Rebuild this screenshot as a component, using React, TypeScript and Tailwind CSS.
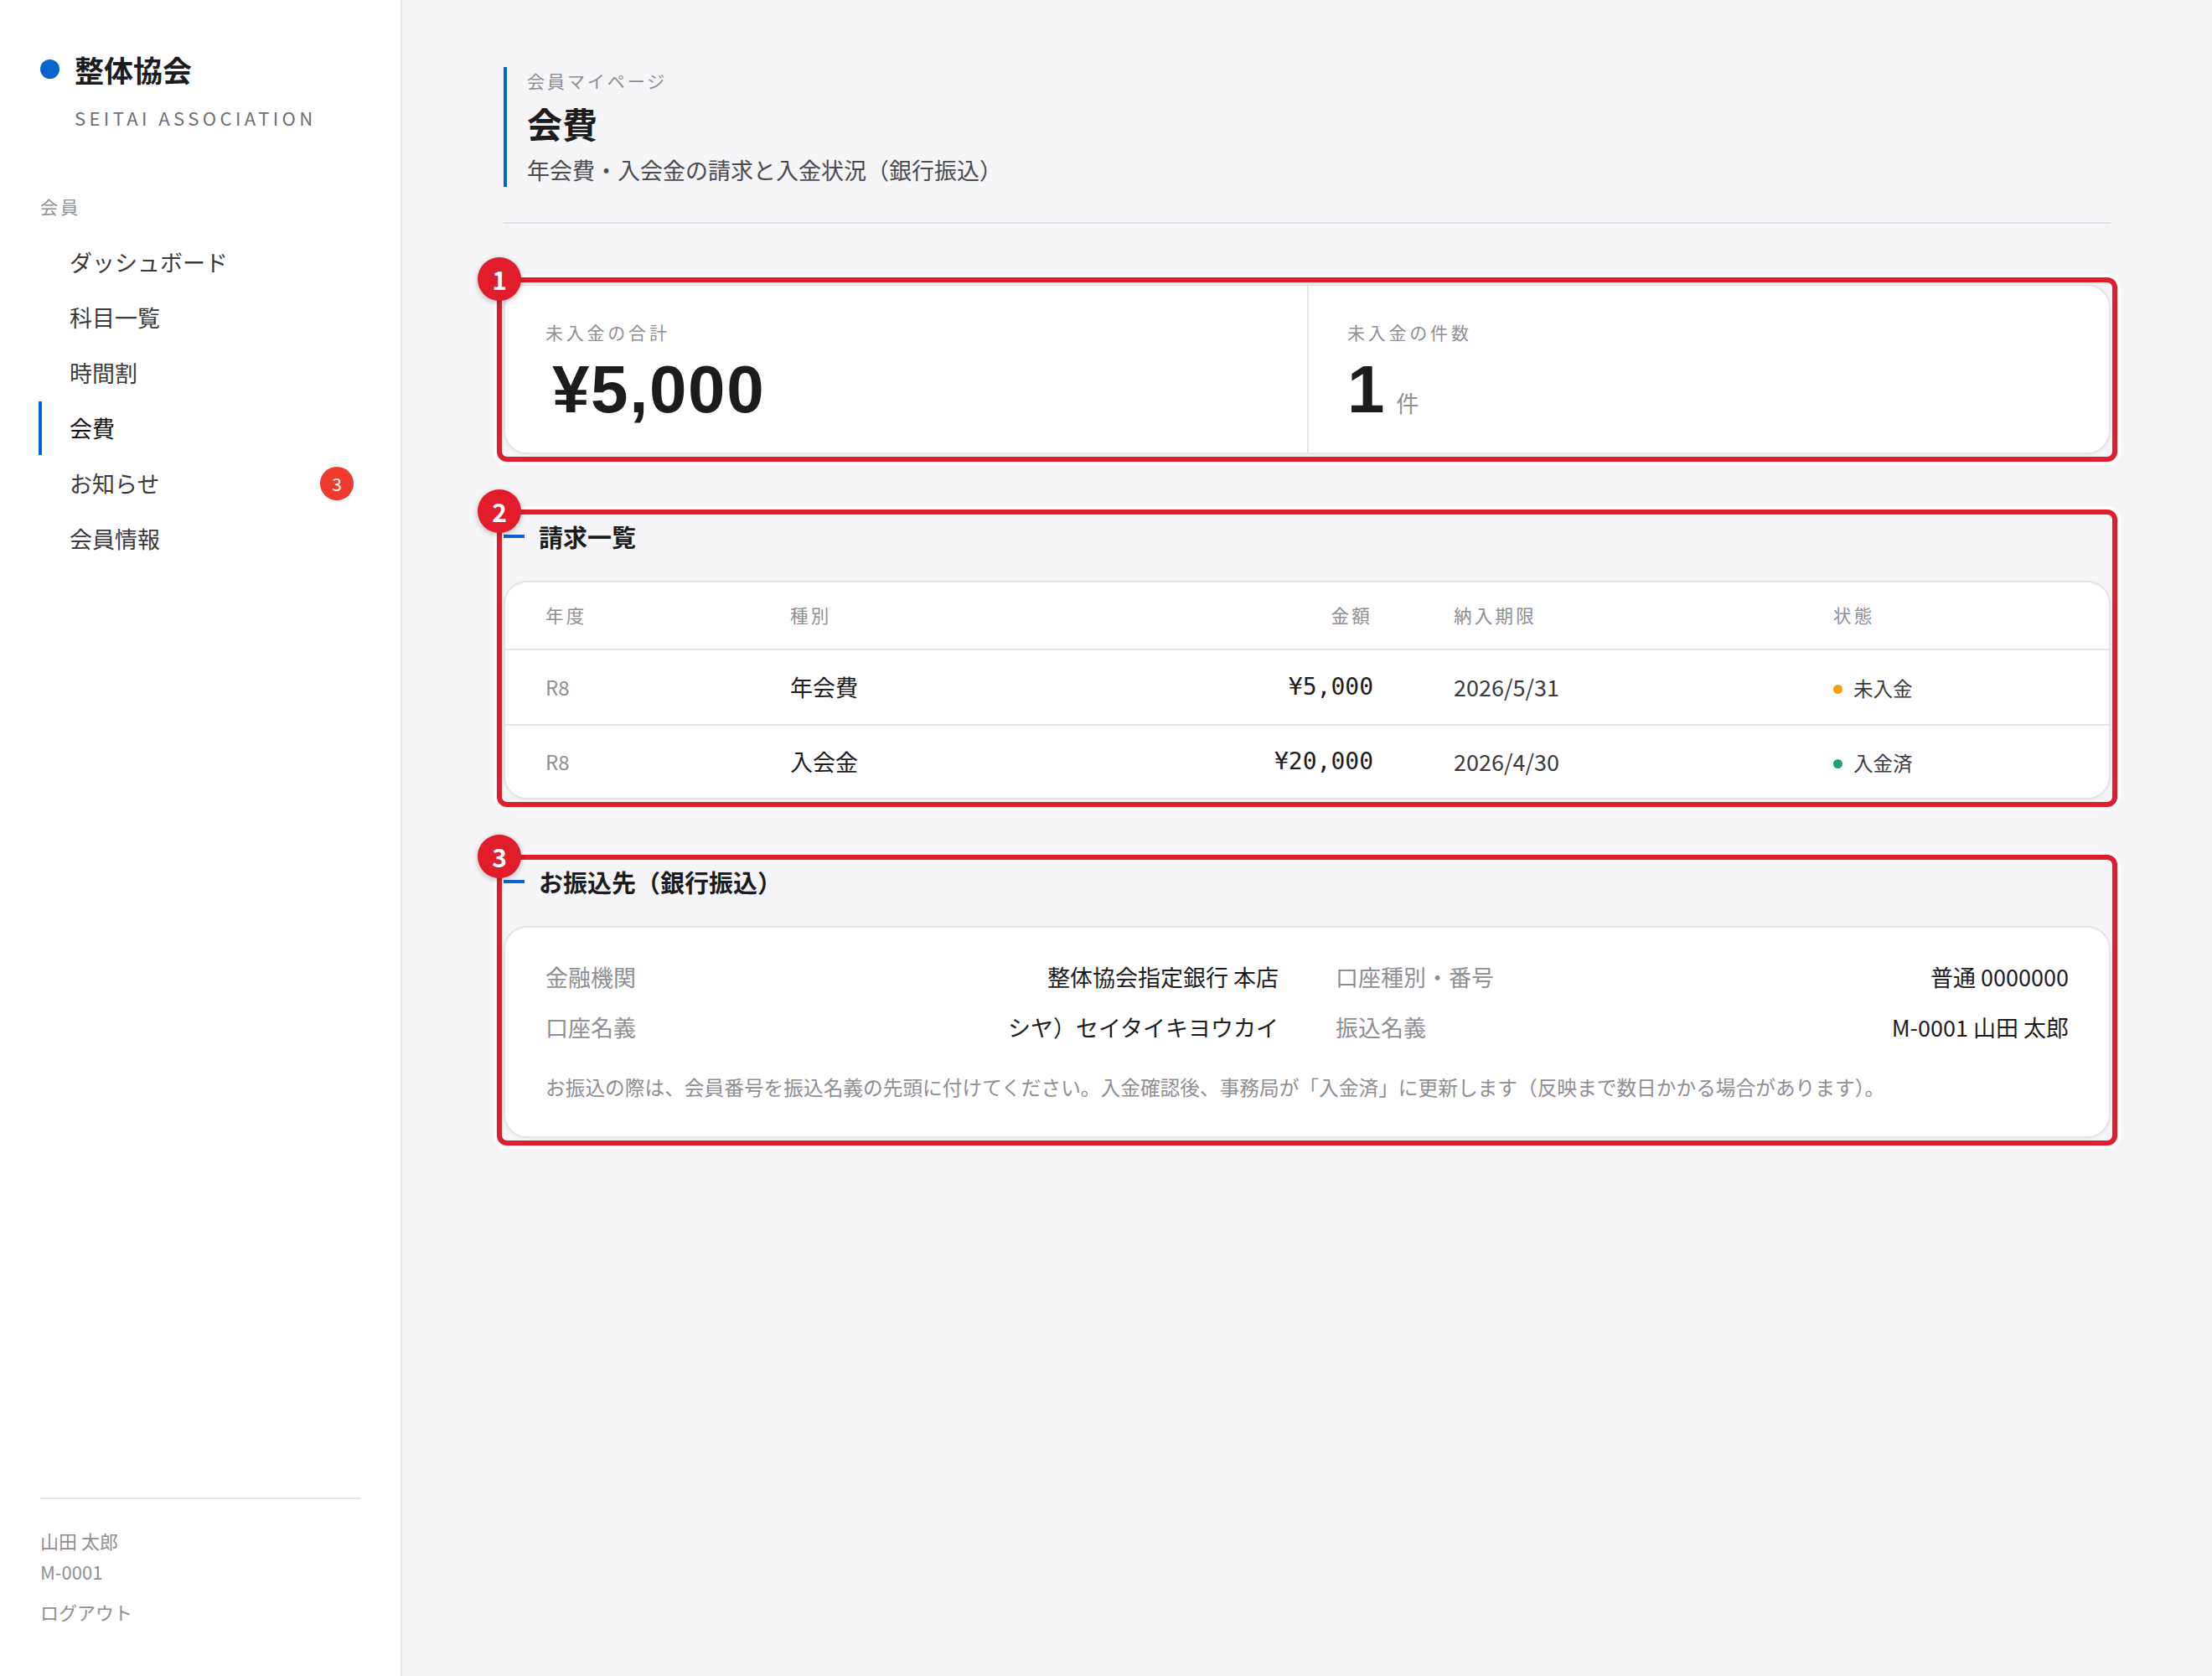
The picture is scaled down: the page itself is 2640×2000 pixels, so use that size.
import type { ReactNode } from "react";

type NavItem = {
  label: string;
  active?: boolean;
  badge?: number;
};

const navItems: NavItem[] = [
  { label: "ダッシュボード" },
  { label: "科目一覧" },
  { label: "時間割" },
  { label: "会費", active: true },
  { label: "お知らせ", badge: 3 },
  { label: "会員情報" },
];

type Invoice = {
  year: string;
  kind: string;
  amount: string;
  due: string;
  paid: boolean;
};

const invoices: Invoice[] = [
  { year: "R8", kind: "年会費", amount: "¥5,000", due: "2026/5/31", paid: false },
  { year: "R8", kind: "入会金", amount: "¥20,000", due: "2026/4/30", paid: true },
];

function Marked({ n, children }: { n: number; children: ReactNode }) {
  return (
    <section className="relative">
      {children}
      <div className="pointer-events-none absolute -left-[8px] -right-[8px] -top-[8px] -bottom-[9px] rounded-[12px] border-[6px] border-[#e11d2b] shadow-[0_0_0_4px_rgba(255,255,255,0.85)]" />
      <div className="absolute -left-[31px] -top-[32px] z-10 flex h-[52px] w-[52px] items-center justify-center rounded-full bg-[#e11d2b] text-[30px] font-bold leading-none text-white shadow-[0_2px_6px_rgba(0,0,0,0.25)]">
        {n}
      </div>
    </section>
  );
}

function SectionTitle({ children }: { children: ReactNode }) {
  return (
    <div className="mb-[29px] flex h-[48px] items-center gap-[17px]">
      <span className="h-[4px] w-[25px] bg-[#0a64d0]" />
      <h2 className="text-[29px] font-bold leading-[48px] text-[#1c1c1e]">{children}</h2>
    </div>
  );
}

function Sidebar() {
  return (
    <aside className="flex min-h-screen w-[480px] shrink-0 flex-col border-r-2 border-[#e5e5ea] bg-white pl-[48px] pr-[47px] pt-[58px] pb-[60px]">
      <div className="flex items-center gap-[18px]">
        <span className="h-[23px] w-[23px] rounded-full bg-[#0a64d0]" />
        <span className="text-[35px] font-bold leading-[49px] text-[#1c1c1e]">整体協会</span>
      </div>
      <div className="mt-[18px] pl-[41px] text-[22px] leading-[30px] tracking-[0.2em] text-[#6e6e73]">
        SEITAI ASSOCIATION
      </div>

      <div className="mt-[75px] text-[21px] leading-[32px] tracking-[0.15em] text-[#8e8e93]">会員</div>

      <nav className="mt-[19px] flex flex-col gap-[2px]">
        {navItems.map((item) => (
          <div
            key={item.label}
            className={
              item.active
                ? "-ml-[2px] flex h-[64px] items-center justify-between border-l-[4px] border-[#0a64d0] pl-[33px] pr-[9px] text-[27px] text-[#111113]"
                : "-ml-[2px] flex h-[64px] items-center justify-between border-l-[4px] border-transparent pl-[33px] pr-[9px] text-[27px] text-[#3a3a3c]"
            }
          >
            <span>{item.label}</span>
            {item.badge ? (
              <span className="flex h-[40px] w-[40px] items-center justify-center rounded-full bg-[#ef3b2d] text-[21px] leading-none text-white">
                {item.badge}
              </span>
            ) : null}
          </div>
        ))}
      </nav>

      <div className="mt-auto border-t-2 border-[#e5e5ea] pt-[31px] text-[22px] text-[#8e8e93]">
        <div className="leading-[37px]">山田 太郎</div>
        <div className="leading-[37px]">M-0001</div>
        <div className="mt-[12px] leading-[34px]">ログアウト</div>
      </div>
    </aside>
  );
}

const cols = "grid grid-cols-[292px_1fr_301px_453px_281px] items-center px-[48px]";

export default function App() {
  return (
    <div className="flex min-h-screen bg-[#f5f5f7] font-['Noto_Sans_CJK_JP','Noto_Sans',sans-serif]">
      <Sidebar />

      <main className="flex-1 px-[121px] pt-[80px] pb-[80px]">
        <div className="border-b-2 border-[#e3e3e8] pb-[42px]">
          <div className="border-l-[4px] border-[#0a64d0] pb-[3px] pl-[24px]">
            <div className="text-[21px] leading-[32px] tracking-[0.14em] text-[#8e8e93]">会員マイページ</div>
            <h1 className="mt-[7px] text-[42px] font-bold leading-[56px] text-[#1c1c1e]">会費</h1>
            <p className="mt-[11px] text-[27px] leading-[34px] text-[#4a4a4f]">
              年会費・入会金の請求と入金状況（銀行振込）
            </p>
          </div>
        </div>

        <div className="mt-[72px] flex flex-col gap-[74px]">
          <Marked n={1}>
            <div className="grid grid-cols-2 overflow-hidden rounded-[28px] border-2 border-[#e4e4e8] bg-white shadow-[0_1px_3px_rgba(0,0,0,0.05)]">
              <div className="pl-[48px] pt-[40px] pb-[28px]">
                <div className="text-[21px] leading-[30px] tracking-[0.18em] text-[#8e8e93]">未入金の合計</div>
                <div className="ml-[8px] mt-[7px] font-['Liberation_Sans',sans-serif] text-[80px] font-bold leading-[94px] tracking-[0.02em] text-[#1c1c1e]">
                  ¥5,000
                </div>
              </div>
              <div className="border-l-2 border-[#e4e4e8] pl-[46px] pt-[40px] pb-[28px]">
                <div className="text-[21px] leading-[30px] tracking-[0.18em] text-[#8e8e93]">未入金の件数</div>
                <div className="mt-[7px] flex h-[94px] items-baseline gap-[14px]">
                  <span className="font-['Liberation_Sans',sans-serif] text-[80px] font-bold leading-[94px] text-[#1c1c1e]">1</span>
                  <span className="text-[27px] leading-[30px] text-[#8e8e93]">件</span>
                </div>
              </div>
            </div>
          </Marked>

          <Marked n={2}>
            <SectionTitle>請求一覧</SectionTitle>
            <div className="overflow-hidden rounded-[28px] border-2 border-[#e4e4e8] bg-white shadow-[0_1px_3px_rgba(0,0,0,0.05)]">
              <div className={`${cols} h-[81px] border-b-2 border-[#e4e4e8] text-[21.5px] tracking-[0.15em] text-[#8e8e93]`}>
                <span>年度</span>
                <span>種別</span>
                <span className="pr-[97px] text-right">金額</span>
                <span>納入期限</span>
                <span>状態</span>
              </div>
              {invoices.map((inv, i) => (
                <div
                  key={inv.kind}
                  className={
                    i < invoices.length - 1
                      ? `${cols} h-[90px] border-b-2 border-[#e4e4e8]`
                      : `${cols} h-[86px]`
                  }
                >
                  <span className="text-[24px] text-[#8e8e93]">{inv.year}</span>
                  <span className="text-[27px] text-[#1c1c1e]">{inv.kind}</span>
                  <span className="pr-[96px] text-right font-['DejaVu_Sans_Mono',monospace] text-[28px] text-[#1c1c1e]">
                    {inv.amount}
                  </span>
                  <span className="text-[27px] text-[#3a3a3c]">{inv.due}</span>
                  <span className="flex items-center gap-[13px] pt-[4px] text-[23.5px] text-[#3a3a3c]">
                    <span className={inv.paid ? "h-[11px] w-[11px] rounded-full bg-[#22a06b]" : "h-[11px] w-[11px] rounded-full bg-[#f59e0b]"} />
                    {inv.paid ? "入金済" : "未入金"}
                  </span>
                </div>
              ))}
            </div>
          </Marked>

          <Marked n={3}>
            <SectionTitle>お振込先（銀行振込）</SectionTitle>
            <div className="rounded-[28px] border-2 border-[#e4e4e8] bg-white px-[48px] pt-[39px] pb-[41px] shadow-[0_1px_3px_rgba(0,0,0,0.05)]">
              <div className="grid grid-cols-2 gap-x-[68px] gap-y-[20px] text-[27px] leading-[40px]">
                <div className="flex justify-between">
                  <span className="text-[#8e8e93]">金融機関</span>
                  <span className="text-[#1c1c1e]">整体協会指定銀行 本店</span>
                </div>
                <div className="flex justify-between">
                  <span className="text-[#8e8e93]">口座種別・番号</span>
                  <span className="text-[#1c1c1e]">普通 0000000</span>
                </div>
                <div className="flex justify-between">
                  <span className="text-[#8e8e93]">口座名義</span>
                  <span className="text-[#1c1c1e]">シヤ）セイタイキヨウカイ</span>
                </div>
                <div className="flex justify-between">
                  <span className="text-[#8e8e93]">振込名義</span>
                  <span className="text-[#1c1c1e]">M-0001 山田 太郎</span>
                </div>
              </div>
              <p className="mt-[33px] text-[23.7px] leading-[36px] text-[#8e8e93]">
                お振込の際は、会員番号を振込名義の先頭に付けてください。入金確認後、事務局が「入金済」に更新します（反映まで数日かかる場合があります）。
              </p>
            </div>
          </Marked>
        </div>
      </main>
    </div>
  );
}
